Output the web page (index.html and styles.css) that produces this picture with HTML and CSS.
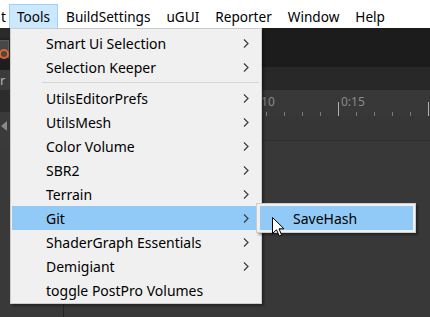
FILE: index.html
```html
<!DOCTYPE html>
<html lang="en">
<head>
    <meta charset="UTF-8">
    <title>Tools menu</title>
    <link rel="stylesheet" href="styles.css">
</head>
<body>
<div class="screen">
    <nav class="menubar">
        <span class="menubar-item menubar-edge">t</span>
        <span class="menubar-item is-open">Tools</span>
        <span class="menubar-item">BuildSettings</span>
        <span class="menubar-item">uGUI</span>
        <span class="menubar-item">Reporter</span>
        <span class="menubar-item">Window</span>
        <span class="menubar-item">Help</span>
    </nav>

    <div class="workspace">
        <aside class="side-panel">
            <div class="side-toolbar"></div>
            <div class="side-tools"><span class="record-btn"><span class="record-dot"></span></span></div>
            <div class="side-gap"></div>
            <div class="side-layer"><span class="side-label">r</span></div>
            <div class="side-dark"></div>
            <div class="side-collapse"><span class="collapse-arrow"></span></div>
            <div class="side-body"></div>
        </aside>
        <main class="timeline">
            <div class="timeline-toolbar"></div>
            <div class="timeline-header"></div>
            <div class="timeline-ruler">
                <span class="ruler-label"></span>
                <span class="ruler-label"></span>
                <span class="ruler-label">0:10</span>
                <span class="ruler-label">0:15</span>
            </div>
            <div class="timeline-track"></div>
            <div class="timeline-body"></div>
        </main>
    </div>

    <div class="dropdown">
        <div class="menu-row">Smart Ui Selection <svg class="chevron" width="6" height="9" viewBox="0 0 6 9"><polyline points="1,0.5 5,4.5 1,8.5"/></svg></div>
        <div class="menu-row">Selection Keeper <svg class="chevron" width="6" height="9" viewBox="0 0 6 9"><polyline points="1,0.5 5,4.5 1,8.5"/></svg></div>
        <div class="menu-sep"></div>
        <div class="menu-row">UtilsEditorPrefs <svg class="chevron" width="6" height="9" viewBox="0 0 6 9"><polyline points="1,0.5 5,4.5 1,8.5"/></svg></div>
        <div class="menu-row">UtilsMesh <svg class="chevron" width="6" height="9" viewBox="0 0 6 9"><polyline points="1,0.5 5,4.5 1,8.5"/></svg></div>
        <div class="menu-row">Color Volume <svg class="chevron" width="6" height="9" viewBox="0 0 6 9"><polyline points="1,0.5 5,4.5 1,8.5"/></svg></div>
        <div class="menu-row">SBR2 <svg class="chevron" width="6" height="9" viewBox="0 0 6 9"><polyline points="1,0.5 5,4.5 1,8.5"/></svg></div>
        <div class="menu-row">Terrain <svg class="chevron" width="6" height="9" viewBox="0 0 6 9"><polyline points="1,0.5 5,4.5 1,8.5"/></svg></div>
        <div class="menu-row is-active">Git <svg class="chevron" width="6" height="9" viewBox="0 0 6 9"><polyline points="1,0.5 5,4.5 1,8.5"/></svg></div>
        <div class="menu-row">ShaderGraph Essentials <svg class="chevron" width="6" height="9" viewBox="0 0 6 9"><polyline points="1,0.5 5,4.5 1,8.5"/></svg></div>
        <div class="menu-row">Demigiant <svg class="chevron" width="6" height="9" viewBox="0 0 6 9"><polyline points="1,0.5 5,4.5 1,8.5"/></svg></div>
        <div class="menu-row">toggle PostPro Volumes</div>
    </div>

    <div class="submenu">
        <div class="menu-row is-active">SaveHash</div>
    </div>

    <svg class="cursor" width="13" height="21" viewBox="0 0 13 21">
        <path d="M0.5 0.5 L0.5 16.5 L4.5 12.8 L7.2 19 L9.6 18 L7 11.8 L12 11.8 Z"/>
    </svg>
</div>
</body>
</html>
```

FILE: styles.css
```css
body {
    margin: 0;
    padding: 0;
    background-color: #383838;
    font-family: "Noto Sans", "Open Sans", sans-serif;
}

.screen {
    position: relative;
    width: 430px;
    height: 317px;
    overflow: hidden;
    display: flex;
    flex-direction: column;
}

/* top menu bar */
.menubar {
    height: 28px;
    background-color: #fff;
    display: flex;
    align-items: flex-end;
    white-space: nowrap;
}

.menubar-item {
    height: 24px;
    line-height: 23px;
    padding: 0 7px;
    font-size: 13.6px;
    color: #000;
    box-sizing: border-box;
    border: 1px solid transparent;
    border-bottom: none;
}

.menubar-edge {
    width: 9px;
    padding: 0;
}

.menubar-item.is-open {
    background-color: #cce8ff;
    border-color: #99d1ff;
}

/* editor behind the menu */
.workspace {
    flex: 1;
    display: flex;
}

.side-panel {
    width: 63px;
    border-right: 1px solid #242424;
    display: flex;
    flex-direction: column;
    background-color: #3a3a3a;
}

.side-toolbar {
    height: 10px;
    background-color: #2a2a2a;
}

.side-tools {
    height: 22px;
    background-color: #232323;
    padding-top: 2px;
    box-sizing: border-box;
}

.record-btn {
    display: block;
    width: 9px;
    height: 18px;
    background-color: #474747;
    border: 1px solid #5a5a5a;
    border-left: none;
    box-sizing: border-box;
    padding-top: 8px;
}

.record-dot {
    display: block;
    width: 6px;
    height: 6px;
    margin-left: -1px;
    border: 2px solid #e0652c;
    border-radius: 50%;
}

.side-gap {
    height: 10px;
    background-color: #1e1e1e;
}

.side-layer {
    height: 20px;
    background-color: #3b3b3b;
}

.side-label {
    display: block;
    font-size: 13px;
    line-height: 20px;
    color: #b4b4b4;
}

.side-dark {
    height: 22px;
    background-color: #2c2c2c;
}

.side-collapse {
    height: 34px;
    background-color: #3a3a3a;
    padding-top: 9px;
    box-sizing: border-box;
}

.collapse-arrow {
    display: block;
    width: 0;
    height: 0;
    margin-left: 1px;
    border-top: 5px solid transparent;
    border-bottom: 5px solid transparent;
    border-right: 6px solid #8a8a8a;
}

.side-body {
    flex: 1;
    background-color: #393939;
}

.timeline {
    flex: 1;
    display: flex;
    flex-direction: column;
}

.timeline-toolbar {
    height: 39px;
    background-color: #1c1c1c;
}

.timeline-header {
    height: 23px;
    background-color: #282828;
}

.timeline-ruler {
    height: 26px;
    display: flex;
    padding-left: 4px;
    background-color: #383838;
    background-image:
        repeating-linear-gradient(to right, #b0b0b0 0 1px, transparent 1px 90px),
        repeating-linear-gradient(to right, #7a7a7a 0 1px, transparent 1px 18px);
    background-size: 100% 14px, 100% 4px;
    background-position: 4px 100%, 4px 100%;
    background-repeat: no-repeat;
}

.ruler-label {
    width: 90px;
    flex: none;
    padding: 5px 0 0 3px;
    box-sizing: border-box;
    font-size: 12px;
    line-height: 14px;
    color: #8a8a8a;
}

.timeline-track {
    height: 24px;
    background-color: #363636;
    border-bottom: 1px solid #2e2e2e;
}

.timeline-body {
    flex: 1;
    background-color: #383838;
}

/* dropdown menus */
.dropdown,
.submenu {
    position: absolute;
    box-sizing: border-box;
    background-color: #f0f0f0;
    border: 1px solid #cccccc;
    box-shadow: 2px 2px 2px rgba(0, 0, 0, 0.35);
}

.dropdown {
    left: 10px;
    top: 28px;
    width: 252px;
    padding: 2px 1px 1px 1px;
}

.submenu {
    left: 256px;
    top: 203px;
    width: 160px;
    padding: 2px 2px 2px 3px;
}

.menu-row {
    height: 24px;
    display: flex;
    align-items: center;
    justify-content: space-between;
    padding: 0 11px 0 34px;
    font-size: 14px;
    color: #000;
    white-space: nowrap;
}

.submenu .menu-row {
    padding-left: 33px;
}

.menu-row.is-active {
    background-color: #91c9f7;
}

.chevron polyline {
    fill: none;
    stroke: #3c3c3c;
    stroke-width: 1.2;
}

.menu-sep {
    height: 1px;
    margin: 3px 1px 3px 30px;
    background-color: #d5d5d5;
}

.cursor {
    position: absolute;
    left: 272px;
    top: 217px;
}

.cursor path {
    fill: #fff;
    stroke: #000;
    stroke-width: 1;
    stroke-linejoin: miter;
}
```
